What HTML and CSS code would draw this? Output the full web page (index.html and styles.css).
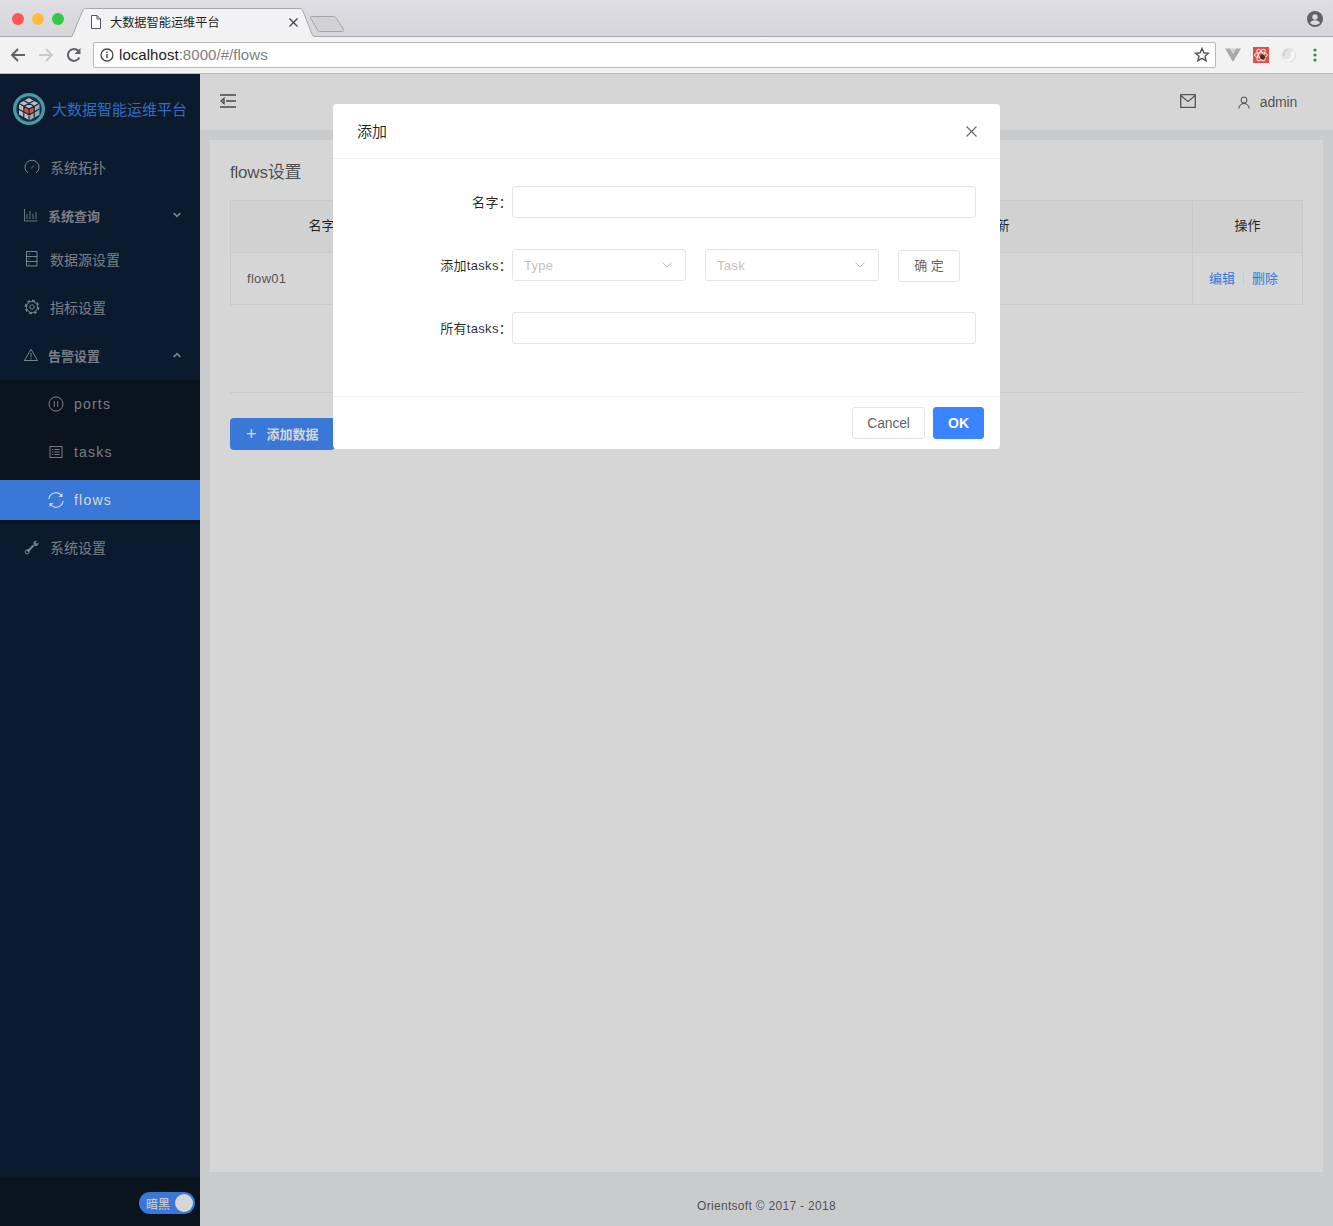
FILE: index.html
```html
<!DOCTYPE html>
<html>
<head>
  <meta charset="UTF-8">
  <title>大数据智能运维平台</title>
  <link rel="stylesheet" href="styles.css">
</head>
<body>
  <div class="browser">
    <div class="tab-strip">
      <div class="lights">
        <span class="light light-red"></span>
        <span class="light light-yellow"></span>
        <span class="light light-green"></span>
      </div>
      <div class="tab">
        <svg class="tab-shape" width="246" height="30" viewBox="0 0 246 30">
          <path d="M0 30V28.500h2L13 2c.5-1 1-1.500 2.500-1.500H230c1.500 0 2 .5 2.500 1.500L242 26c.7 1.800 1.500 2.500 3 2.500h1V30z" fill="#f2f2f4"/>
          <path d="M0 28.500h2L13 2c.5-1 1-1.500 2.500-1.500H230c1.500 0 2 .5 2.500 1.500L242 26c.7 1.800 1.500 2.500 3 2.500h1" fill="none" stroke="#a8a8aa"/>
        </svg>
        <svg class="tab-file" width="12" height="14" viewBox="0 0 12 14"><path d="M1.500.5h5.500l3.500 3.500v9.500h-9zM7 .5v3.500h3.500" fill="#fff" stroke="#555"/></svg>
        <span class="tab-title">大数据智能运维平台</span>
        <svg class="tab-close" width="9" height="9" viewBox="0 0 9 9"><path d="M.5.500l8 8M8.500.500l-8 8" stroke="#444" stroke-width="1.300"/></svg>
      </div>
      <svg class="new-tab" width="36" height="18" viewBox="0 0 36 18"><path d="M1.500 1.500h22c1.500 0 2 .5 3 2l7 11c.7 1.200 0 2-1 2h-23c-1 0-1.500-.5-2-1.500l-7-12c-.5-1 .0-1.500 1-1.500z" fill="#d2d2d4" stroke="#a5a5a8"/></svg>
      <svg class="profile" width="16" height="16" viewBox="0 0 16 16"><circle cx="8" cy="8" r="8" fill="#626266"/><circle cx="8" cy="6" r="2.700" fill="#dcdce0"/><path d="M3 12c1-2 3-2.700 5-2.700s4 .7 5 2.700c-1.200 1.300-3 2-5 2s-3.800-.7-5-2z" fill="#dcdce0"/></svg>
    </div>
    <div class="toolbar">
      <svg class="nav-icon" width="16" height="16" viewBox="0 0 16 16"><path d="M15 8H2M8 2L2 8l6 6" fill="none" stroke="#5f6368" stroke-width="2"/></svg>
      <svg class="nav-icon" width="16" height="16" viewBox="0 0 16 16"><path d="M1 8h13M8 2l6 6-6 6" fill="none" stroke="#c9c9cb" stroke-width="2"/></svg>
      <svg class="nav-icon" width="16" height="16" viewBox="0 0 16 16"><path d="M13.300 10.500A6 6 0 1 1 12.300 3.800" fill="none" stroke="#5f6368" stroke-width="2"/><path d="M14.500 1v6h-6z" fill="#5f6368"/></svg>
      <div class="address">
        <svg width="14" height="14" viewBox="0 0 14 14"><circle cx="7" cy="7" r="6" fill="none" stroke="#444" stroke-width="1.300"/><path d="M7 6v4.300M7 3.500v1.500" stroke="#444" stroke-width="1.400"/></svg>
        <span class="url"><b>localhost</b>:8000/#/flows</span>
        <svg class="star" width="16" height="16" viewBox="0 0 16 16"><path d="M8 1.500l1.900 4.300 4.600.4-3.500 3 1.100 4.500L8 11.300l-4.100 2.400 1.100-4.500-3.500-3 4.600-.4z" fill="none" stroke="#555" stroke-width="1.400"/></svg>
      </div>
      <div class="extensions">
        <svg width="16" height="16" viewBox="0 0 16 16"><path d="M0 1.500h5l3 5 3-5h5L8 15z" fill="#a9a9ab"/><path d="M5 1.500h6L8 6.500z" fill="#d4d4d6"/></svg>
        <svg class="ext-react" width="16" height="16" viewBox="0 0 16 16"><rect width="16" height="16" fill="#d9534a"/><ellipse cx="8" cy="8" rx="6.500" ry="2.500" fill="none" stroke="#fbe3e0"/><ellipse cx="8" cy="8" rx="6.500" ry="2.500" fill="none" stroke="#fbe3e0" transform="rotate(60 8 8)"/><ellipse cx="8" cy="8" rx="6.500" ry="2.500" fill="none" stroke="#fbe3e0" transform="rotate(120 8 8)"/><circle cx="9.500" cy="10" r="2.500" fill="#4a2a2a"/></svg>
        <svg width="16" height="16" viewBox="0 0 16 16"><circle cx="8" cy="8" r="7.500" fill="#e4e4e4"/><path d="M3 12c4 1.500 8-1 7-5 0-1.500 1-3 3-3.500 2 4 0 10-5 11-2 .3-4-.7-5-2.500z" fill="#f8f8f8"/><path d="M1.500 9c-.5-4 3-7.500 7-7.500-2.500 1-5 3.500-5 7z" fill="#d0d0d0"/></svg>
        <svg class="ext-menu" width="4" height="14" viewBox="0 0 4 14"><circle cx="2" cy="2" r="1.600" fill="#2e8b57"/><circle cx="2" cy="7" r="1.600" fill="#2e8b57"/><circle cx="2" cy="12" r="1.600" fill="#2e8b57"/></svg>
      </div>
    </div>
  </div>

  <div class="app">
    <aside class="sider">
      <div class="logo">
        <svg width="32" height="32" viewBox="0 0 32 32">
          <circle cx="16" cy="16" r="16" fill="#57b8c6"/>
          <circle cx="16" cy="16" r="12.700" fill="#1a3a50"/>
          <path d="M16 4.500l10.500 5.800v11.400L16 27.500 5.500 21.700V10.300z" fill="#dfe3f0" stroke="#1d2a40"/>
          <path d="M16 16l10.500-5.700v11.400L16 27.500z" fill="#b9c6de"/>
          <path d="M16 16l-5-2.800v5.600l5 2.800 5-2.800v-5.600z" fill="#f0693a"/>
          <path d="M5.500 10.300L16 16l10.500-5.700M16 16v11.500M10.700 7.400l10.500 5.800M21.300 7.400l-10.500 5.800M5.500 16l5.300 2.900M26.500 16l-5.300 2.900M10.800 13.200v11.400M21.200 13.200v11.400M10.800 18.900l5.200 2.900 5.200-2.900" fill="none" stroke="#1d2a40" stroke-width="1.100"/>
        </svg>
        <span class="logo-text">大数据智能运维平台</span>
      </div>
      <nav class="menu">
        <a class="menu-item">
          <svg class="menu-icon" width="16" height="16" viewBox="0 0 16 16"><path d="M4 14A7 7 0 1 1 12 14M7 9.500l3-3" fill="none" stroke="currentColor"/></svg>
          <span>系统拓扑</span>
        </a>
        <a class="menu-item menu-title">
          <svg class="menu-icon" width="14" height="14" viewBox="0 0 14 14"><path d="M.5 1v12h13M3 11V6M6 11V3M9 11V6M12 11V4" fill="none" stroke="currentColor" stroke-width=".9"/></svg>
          <span>系统查询</span>
          <svg class="menu-arrow" width="8" height="6" viewBox="0 0 8 6"><path d="M.7 1.200L4 4.300l3.300-3.100" fill="none" stroke="currentColor" stroke-width="1.800"/></svg>
        </a>
        <a class="menu-item menu-item-short">
          <svg class="menu-icon" width="16" height="16" viewBox="0 0 16 16"><path d="M3 .5h10.500v14.500H3zM3 5.500h10.500M3 10.500h10.500M5 3h1M5 8h1M5 13h1" fill="none" stroke="currentColor" transform="translate(-.5)"/></svg>
          <span>数据源设置</span>
        </a>
        <a class="menu-item">
          <svg class="menu-icon" width="16" height="16" viewBox="0 0 16 16"><circle cx="8" cy="8" r="5.500" fill="none" stroke="currentColor"/><circle cx="8" cy="8" r="6.600" fill="none" stroke="currentColor" stroke-width="1.400" stroke-dasharray="3 2.180"/><circle cx="8" cy="8" r="2.200" fill="none" stroke="currentColor"/></svg>
          <span>指标设置</span>
        </a>
        <a class="menu-item menu-title menu-open">
          <svg class="menu-icon" width="14" height="14" viewBox="0 0 14 14"><path d="M7 1.200L13.500 12.500H.5zM7 5v4.300M7 10.300v1.200" fill="none" stroke="currentColor"/></svg>
          <span>告警设置</span>
          <svg class="menu-arrow" width="8" height="6" viewBox="0 0 8 6"><path d="M.7 4.800L4 1.700l3.300 3.100" fill="none" stroke="currentColor" stroke-width="1.800"/></svg>
        </a>
        <div class="submenu">
          <a class="menu-item sub-item">
            <svg class="menu-icon" width="16" height="16" viewBox="0 0 16 16"><circle cx="8" cy="8" r="7" fill="none" stroke="currentColor"/><path d="M6.300 5v6M9.700 5v6" stroke="currentColor"/></svg>
            <span>ports</span>
          </a>
          <a class="menu-item sub-item">
            <svg class="menu-icon" width="16" height="16" viewBox="0 0 16 16"><path d="M2 2.500h12v11H2zM6.500 5.500h5M6.500 8h5M6.500 10.500h5M4.300 5.500h1M4.300 8h1M4.300 10.500h1" fill="none" stroke="currentColor"/></svg>
            <span>tasks</span>
          </a>
          <a class="menu-item sub-item sub-active">
            <svg class="menu-icon" width="16" height="16" viewBox="0 0 16 16"><path d="M1 7A7 7 0 0 1 13.500 3.500M15 9A7 7 0 0 1 2.500 12.500" fill="none" stroke="currentColor" stroke-width="1.200"/><path d="M14.500 1v4h-4zM1.500 15v-4h4z" fill="currentColor"/></svg>
            <span>flows</span>
          </a>
        </div>
        <a class="menu-item">
          <svg class="menu-icon" width="16" height="16" viewBox="0 0 16 16"><path d="M3.500 12.500l6-6" fill="none" stroke="currentColor" stroke-width="2.200"/><path d="M9.300 4.500a3 3 0 0 1 3.700-2.700l-1.600 1.900 1.100 1.100 1.900-1.600a3 3 0 0 1-4.300 3.500z" fill="currentColor"/><circle cx="3.200" cy="12.800" r="2" fill="none" stroke="currentColor"/></svg>
          <span>系统设置</span>
        </a>
      </nav>
      <div class="sider-foot">
        <div class="switch"><span>暗黑</span><i class="knob"></i></div>
      </div>
    </aside>

    <div class="main">
      <header class="topbar">
        <svg width="16" height="14" viewBox="0 0 16 14"><path d="M0 1h16M6 7h10M0 13h16M4 4.500L1 7l3 2.500z" fill="none" stroke="#555" stroke-width="1.300"/></svg>
        <div class="topbar-right">
          <svg width="16" height="14" viewBox="0 0 16 14"><path d="M.7.700h14.600v12.600H.7zM.7 1.500L8 7.500l7.300-6" fill="none" stroke="#666" stroke-width="1.300"/></svg>
          <div class="user">
            <svg width="12" height="13" viewBox="0 0 12 13"><circle cx="6" cy="4" r="3" fill="none" stroke="#555"/><path d="M1 12.500c0-3 2-5 5-5s5 2 5 5" fill="none" stroke="#555"/></svg>
            <span>admin</span>
          </div>
        </div>
      </header>

      <section class="content">
        <div class="card">
          <h2 class="card-title">flows设置</h2>
          <table class="grid">
            <thead>
              <tr>
                <th class="col-name">名字</th>
                <th class="col-tasks">tasks</th>
                <th class="col-update">最后更新</th>
                <th class="col-action">操作</th>
              </tr>
            </thead>
            <tbody>
              <tr>
                <td>flow01</td>
                <td></td>
                <td></td>
                <td class="cell-action"><a>编辑</a><i class="divider"></i><a>删除</a></td>
              </tr>
            </tbody>
          </table>
          <hr class="rule">
          <button class="add-btn"><span class="plus">+</span>添加数据</button>
        </div>
      </section>

      <footer class="foot">Orientsoft © 2017 - 2018</footer>
    </div>
  </div>

  <div class="mask"></div>
  <div class="modal">
    <div class="modal-head">
      <span>添加</span>
      <svg width="11" height="11" viewBox="0 0 11 11"><path d="M.5.500l10 10M10.500.500l-10 10" stroke="#666" stroke-width="1.100"/></svg>
    </div>
    <div class="modal-body">
      <div class="form-row">
        <label>名字：</label>
        <input class="text-input" type="text">
      </div>
      <div class="form-row">
        <label>添加tasks：</label>
        <div class="select"><span>Type</span><svg width="10" height="6" viewBox="0 0 10 6"><path d="M.5.500L5 5 9.500.500" fill="none" stroke="#bfbfbf"/></svg></div>
        <div class="select"><span>Task</span><svg width="10" height="6" viewBox="0 0 10 6"><path d="M.5.500L5 5 9.500.500" fill="none" stroke="#bfbfbf"/></svg></div>
        <button class="btn btn-confirm">确 定</button>
      </div>
      <div class="form-row">
        <label>所有tasks：</label>
        <input class="text-input" type="text">
      </div>
    </div>
    <div class="modal-foot">
      <button class="btn btn-cancel">Cancel</button>
      <button class="btn btn-ok">OK</button>
    </div>
  </div>
</body>
</html>
```

FILE: styles.css
```css
* {
  box-sizing: border-box;
}

html, body {
  margin: 0;
  height: 100%;
}

body {
  display: flex;
  flex-direction: column;
  height: 100vh;
  overflow: hidden;
  font-family: "Liberation Sans", "Noto Sans CJK SC", sans-serif;
  font-size: 14px;
  color: rgba(0, 0, 0, .65);
  background: #f0f2f5;
}

/* browser chrome */
.browser {
  flex: none;
  height: 74px;
}

.tab-strip {
  position: relative;
  height: 37px;
  background: linear-gradient(#dedee2, #d6d6da);
  display: flex;
  align-items: flex-end;
  border-bottom: 1px solid #a8a8aa;
}

.lights {
  display: flex;
  gap: 8px;
  margin: 0 0 11px 12px;
}

.light {
  width: 12px;
  height: 12px;
  border-radius: 50%;
}

.light-red { background: #fc5753; }
.light-yellow { background: #fdbc40; }
.light-green { background: #33c748; }

.tab {
  position: absolute;
  left: 70px;
  top: 8px;
  width: 246px;
  height: 30px;
  display: flex;
  align-items: center;
  padding: 0 18px 2px 20px;
}

.tab-shape {
  position: absolute;
  left: 0;
  top: 0;
}

.tab-file, .tab-title, .tab-close {
  position: relative;
}

.tab-title {
  margin-left: 8px;
  font-size: 12.200px;
  color: #222;
  flex: 1;
}

.new-tab {
  position: absolute;
  left: 310px;
  top: 15px;
}

.profile {
  position: absolute;
  right: 10px;
  top: 11px;
}

.toolbar {
  height: 37px;
  padding: 0 16px 0 10px;
  background: #f2f2f2;
  border-bottom: 1px solid #b8b8b8;
  display: flex;
  align-items: center;
  gap: 12px;
}

.address {
  flex: 1;
  height: 26px;
  margin: 0 0 1px -1px;
  padding: 0 5px 0 6px;
  background: #fff;
  border: 1px solid #b9b9b9;
  border-radius: 2px;
  display: flex;
  align-items: center;
  gap: 5px;
}

.url {
  flex: 1;
  font-size: 15px;
  letter-spacing: .05px;
  color: #808080;
}

.url b {
  font-weight: normal;
  color: #222;
}

.extensions {
  display: flex;
  align-items: center;
  gap: 12px;
  margin-left: -3px;
}

.ext-menu {
  margin-left: 4px;
}

/* app */
.app {
  flex: 1;
  display: flex;
  min-height: 0;
}

.sider {
  flex: none;
  width: 200px;
  display: flex;
  flex-direction: column;
  background: #0f2036;
  color: rgba(255, 255, 255, .55);
}

.logo {
  height: 70px;
  padding: 0 0 0 13px;
  display: flex;
  align-items: center;
  gap: 7px;
}

.logo-text {
  margin-top: -2px;
  font-size: 15px;
  color: #4080e0;
  white-space: nowrap;
}

.menu {
  flex: 1;
}

.menu a {
  color: inherit;
}

.menu-item {
  height: 48px;
  padding: 0 0 2px 24px;
  display: flex;
  align-items: center;
}

.menu-item-short {
  height: 44px;
  padding-bottom: 6px;
}

.menu-icon {
  flex: none;
  margin-right: 10px;
}

.menu-item span {
  font-size: 14px;
}

.menu-title {
  font-weight: bold;
  position: relative;
}

.menu-title span {
  font-size: 13px;
}

.menu-arrow {
  position: absolute;
  right: 19px;
  top: 20px;
}

.menu-open {
  color: rgba(255, 255, 255, .9);
}

.submenu {
  display: flex;
  flex-direction: column;
  gap: 8px;
  padding: 4px 0;
  background: #0d1826;
}

.sub-item {
  padding: 0 0 0 48px;
  height: 40px;
}

.sub-item span {
  letter-spacing: 1.200px;
}

.sub-active {
  background: #4590ff;
  color: #fff !important;
}

.sider-foot {
  height: 48px;
  padding: 2px 5px 0 0;
  background: #0d1826;
  display: flex;
  align-items: center;
  justify-content: flex-end;
}

.switch {
  width: 56px;
  height: 22px;
  border-radius: 11px;
  background: #4590ff;
  display: flex;
  align-items: center;
  justify-content: space-between;
  padding: 0 2px 0 7px;
  color: #fff;
  font-size: 12px;
}

.knob {
  width: 18px;
  height: 18px;
  border-radius: 50%;
  background: #fff;
}

.main {
  flex: 1;
  min-width: 0;
  display: flex;
  flex-direction: column;
}

.topbar {
  flex: none;
  height: 56px;
  padding: 0 36px 2px 20px;
  background: #fff;
  display: flex;
  align-items: center;
  justify-content: space-between;
}

.topbar-right {
  display: flex;
  align-items: center;
  gap: 42px;
}

.user {
  margin-top: 2px;
  display: flex;
  align-items: center;
  gap: 10px;
  letter-spacing: -.2px;
}

.content {
  flex: 1;
  min-height: 0;
  padding: 10px 10px 0;
  display: flex;
}

.card {
  flex: 1;
  background: #fff;
  padding: 20px;
}

.card-title {
  margin: 1px 0 15px;
  font-size: 17px;
  line-height: 24px;
  font-weight: normal;
  letter-spacing: -.2px;
}

.grid {
  width: 100%;
  table-layout: fixed;
  border-collapse: separate;
  border-spacing: 0;
  border: 1px solid #f0f0f0;
}

.grid th {
  height: 52px;
  padding-bottom: 5px;
  font-weight: normal;
  font-size: 13px;
  color: rgba(0, 0, 0, .85);
  background: #fafafa;
  border-bottom: 1px solid #f0f0f0;
}

.grid td {
  height: 51px;
  padding: 0 16px;
  font-size: 13px;
  letter-spacing: .3px;
}

.col-name { width: 181px; }
.col-tasks { width: 363px; }
.col-update { width: 417px; }
.col-action { width: 110px; border-left: 1px solid #f0f0f0; }

.grid .cell-action {
  border-left: 1px solid #f0f0f0;
  text-align: center;
  padding: 0 8px 2px 0;
  color: #4590ff;
  white-space: nowrap;
  letter-spacing: 0;
}

.divider {
  display: inline-block;
  width: 1px;
  height: 13px;
  margin: 0 8px;
  vertical-align: -2px;
  background: #f0f0f0;
}

.rule {
  margin: 87px 0 25px;
  border: 0;
  border-top: 1px solid #f0f0f0;
}

.add-btn {
  width: 105px;
  height: 32px;
  padding: 0 0 0 16px;
  border: 0;
  border-radius: 4px;
  background: #4590ff;
  color: #fff;
  font: bold 13px "Liberation Sans", "Noto Sans CJK SC", sans-serif;
  text-align: left;
}

.plus {
  margin-right: 10px;
  font-size: 18px;
  font-weight: normal;
  vertical-align: -1px;
}

.foot {
  flex: none;
  height: 54px;
  padding-top: 27px;
  text-align: center;
  font-size: 12px;
  letter-spacing: .3px;
}

/* modal */
.mask {
  position: fixed;
  left: 0;
  right: 0;
  top: 74px;
  bottom: 0;
  background: rgba(0, 0, 0, .16);
}

.modal {
  position: fixed;
  left: 333px;
  top: 104px;
  width: 667px;
  background: #fff;
  border-radius: 4px;
}

.modal-head {
  height: 55px;
  padding: 0 23px 0 24px;
  border-bottom: 1px solid #f0f0f0;
  display: flex;
  align-items: center;
  justify-content: space-between;
  font-size: 15px;
  color: rgba(0, 0, 0, .85);
}

.modal-head span {
  margin-top: -2px;
}

.modal-body {
  height: 237px;
  padding: 27px 24px 0;
  display: flex;
  flex-direction: column;
  gap: 31px;
}

.form-row {
  display: flex;
  align-items: center;
  height: 32px;
}

.form-row label {
  flex: none;
  width: 155px;
  padding-bottom: 2px;
  text-align: right;
  font-size: 13px;
  color: rgba(0, 0, 0, .85);
  white-space: nowrap;
  letter-spacing: .3px;
}

.text-input {
  flex: 1;
  height: 32px;
  border: 1px solid #e4e4e4;
  border-radius: 3px;
  background: #fff;
}

.select {
  flex: none;
  width: 174px;
  height: 32px;
  margin-right: 19px;
  padding: 0 13px 0 11px;
  border: 1px solid #e4e4e4;
  border-radius: 3px;
  display: flex;
  align-items: center;
  justify-content: space-between;
  color: #bfbfbf;
  font-size: 13px;
  letter-spacing: .3px;
}

.btn {
  height: 32px;
  border: 1px solid #e4e4e4;
  border-radius: 3px;
  background: #fff;
  font: 14px "Liberation Sans", "Noto Sans CJK SC", sans-serif;
  color: rgba(0, 0, 0, .65);
}

.btn-confirm {
  width: 62px;
  margin-top: 2px;
  padding-bottom: 4px;
  font-size: 13px;
}

.modal-foot {
  height: 53px;
  padding: 10px 16px 0;
  border-top: 1px solid #f0f0f0;
  display: flex;
  justify-content: flex-end;
  gap: 8px;
}

.btn-cancel {
  width: 73px;
  letter-spacing: -.2px;
}

.btn-ok {
  width: 51px;
  border-color: #3a84ff;
  background: #3a84ff;
  color: #fff;
  font-weight: bold;
}
```
